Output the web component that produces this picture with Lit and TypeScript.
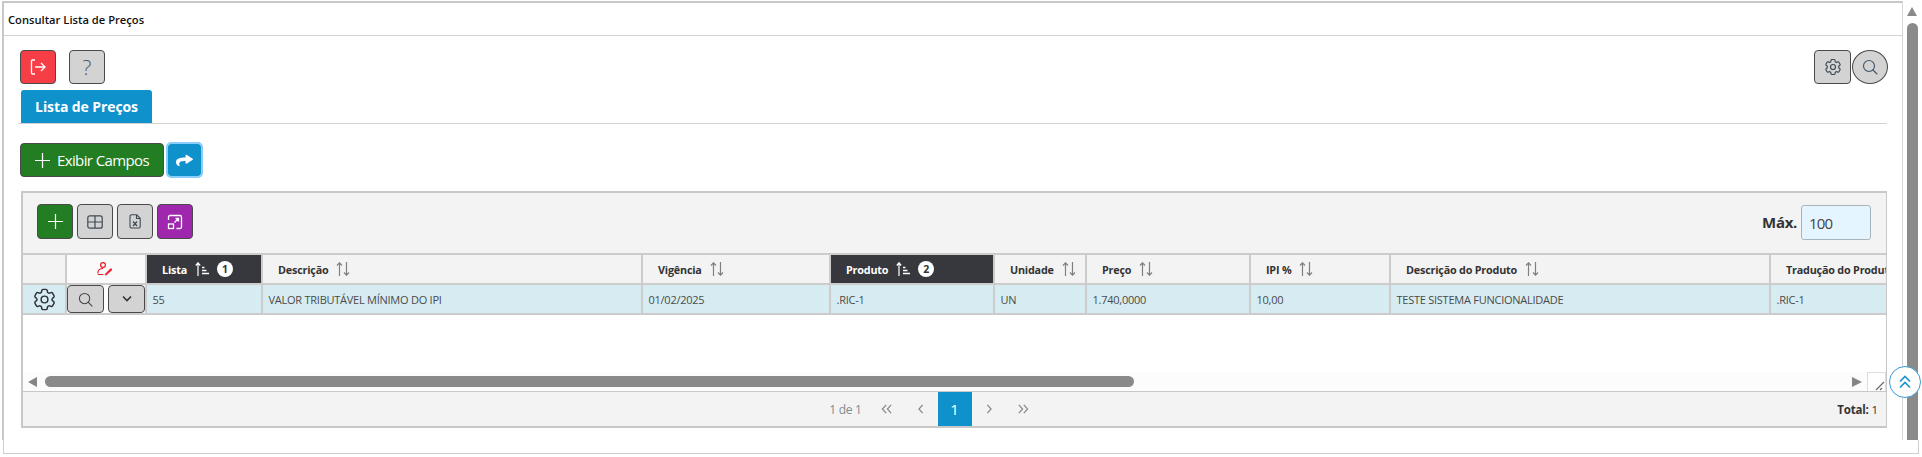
import { LitElement, html, css, svg } from "lit";
import { customElement } from "lit/decorators.js";

const sortBoth = html`<svg class="sort" width="14" height="14" viewBox="0 0 14 14" fill="none" stroke="#808080" stroke-width="1.200"><path d="M3.500 14V1M1 3.500L3.500 .8 6 3.500"/><path d="M10.500 0v13M8 10.500l2.500 2.700 2.500-2.700"/></svg>`;
const sortAsc = html`<svg class="sort" width="14" height="14" viewBox="0 0 14 14" fill="none" stroke="#fff" stroke-width="1.200"><path d="M3 14V1M.8 3.500L3 .8l2.200 2.700"/><path d="M7 5.500h2.500M7 8.500h4.500M7 11.500h7" stroke-width="1.400"/></svg>`;

const cols = [
  { w: 116, t: "Lista", k: 1, v: "55" },
  { w: 380, t: "Descrição", v: "VALOR TRIBUTÁVEL MÍNIMO DO IPI" },
  { w: 188, t: "Vigência", v: "01/02/2025" },
  { w: 164, t: "Produto", k: 2, v: ".RIC-1" },
  { w: 92, t: "Unidade", v: "UN" },
  { w: 164, t: "Preço", v: "1.740,0000" },
  { w: 140, t: "IPI %", v: "10,00" },
  { w: 380, t: "Descrição do Produto", v: "TESTE SISTEMA FUNCIONALIDADE" },
  { w: 200, t: "Tradução do Produto", v: ".RIC-1" },
];

const gear = (s: number, c: string, w: number) => svg`<svg width="${s}" height="${s}" viewBox="0 0 24 24" fill="none" stroke="${c}" stroke-width="${w}" stroke-linejoin="round"><path d="M9.594 3.940c.09-.542.56-.94 1.110-.94h2.593c.55 0 1.020.398 1.110.94l.213 1.281c.063.374.313.686.645.870.074.04.147.083.22.127.325.196.72.257 1.075.124l1.217-.456a1.125 1.125 0 0 1 1.370.49l1.296 2.247a1.125 1.125 0 0 1-.26 1.431l-1.003.827c-.293.241-.438.613-.43.992a7.723 7.723 0 0 1 0 .255c-.008.378.137.75.43.991l1.004.827c.424.35.534.955.26 1.430l-1.298 2.247a1.125 1.125 0 0 1-1.369.491l-1.217-.456c-.355-.133-.75-.072-1.076.124a6.470 6.470 0 0 1-.22.128c-.331.183-.581.495-.644.869l-.213 1.281c-.09.543-.56.94-1.110.94h-2.594c-.55 0-1.019-.398-1.110-.94l-.213-1.281c-.062-.374-.312-.686-.644-.87a6.520 6.520 0 0 1-.22-.127c-.325-.196-.72-.257-1.076-.124l-1.217.456a1.125 1.125 0 0 1-1.369-.49l-1.297-2.247a1.125 1.125 0 0 1 .26-1.431l1.004-.827c.292-.24.437-.613.43-.991a6.932 6.932 0 0 1 0-.255c.007-.38-.138-.751-.43-.992l-1.004-.827a1.125 1.125 0 0 1-.26-1.430l1.297-2.247a1.125 1.125 0 0 1 1.370-.491l1.216.456c.356.133.751.072 1.076-.124.072-.044.146-.086.22-.128.332-.183.582-.495.644-.869l.214-1.280Z"/><circle cx="12" cy="12" r="3"/></svg>`;
const search = (s: number, c: string) => svg`<svg width="${s}" height="${s}" viewBox="0 0 16 16" fill="none" stroke="${c}" stroke-width="1.100"><circle cx="7" cy="7" r="5.500"/><path d="M11 11l4 4" stroke-linecap="round"/></svg>`;
const chevs = (d: string) => svg`<svg width="12" height="10" viewBox="0 0 14 12" fill="none" stroke="#858585" stroke-width="1.400"><path d="${d}"/></svg>`;
const plus = html`<svg width="15" height="15" viewBox="0 0 16 16" stroke="#fff" stroke-width="1.300"><path d="M8 0v16M0 8h16"/></svg>`;

@customElement("app-root")
export class AppRoot extends LitElement {
  static styles = css`
    :host { display: block; width: 1922px; height: 457px; overflow: hidden; background: #fff; font-family: "Open Sans", "Noto Sans", sans-serif; color: #333; position: relative; }
    * { box-sizing: border-box; }
    .page { padding-top: 1px; }
    .main { display: flex; height: 439px; }
    .below { height: 14px; width: 1916px; margin-left: 3px; border: 1px solid #cfcfcf; border-top: none; }
    .frame { width: 1901px; flex: none; border: 1px solid #d6d6d6; border-left: 2px solid #c8c8c8; border-top: 2px solid #c8c8c8; border-bottom: none; margin-left: 2px; }
    .vbar { width: 19px; flex: none; display: flex; flex-direction: column; align-items: flex-start; padding: 6px 0 0 4px; }
    .vup { width: 0; height: 0; border-left: 5.500px solid transparent; border-right: 5.500px solid transparent; border-bottom: 9px solid #8a8a8a; }
    .vthumb { width: 11px; flex: 1; margin-top: 7px; background: #8a8a8a; border-radius: 6px 6px 0 0; }
    .title { height: 33px; border-bottom: 1px solid #d2d2d2; display: flex; align-items: center; padding-left: 4px; font-size: 11.200px; font-weight: 600; color: #111; }
    .content { padding: 14px 15px 0 16px; }
    .topbar { display: flex; height: 34px; align-items: stretch; }
    .btn { width: 36px; height: 34px; border-radius: 4px; border: 1px solid #4a4a4a; background: #d3d3d3; display: flex; align-items: center; justify-content: center; flex: none; color: #555; }
    .red { background: #f63e46; }
    .help { margin-left: 13px; font-size: 21px; font-weight: 300; color: #4c5560; }
    .spacer { flex: 1; }
    .cfg { width: 37px; }
    .round { border-radius: 50%; margin-left: 1px; margin-right: -1px; }
    .tabs { border-bottom: 1px solid #d2d2d2; margin-top: 6px; height: 34px; margin-left: -2px; padding-left: 3px; }
    .tab { display: inline-flex; width: 131px; height: 33px; align-items: center; justify-content: center; background: #0f91cc; color: #fff; font-weight: 700; font-size: 14px; border-radius: 3px 3px 0 0; letter-spacing: -0.100px; }
    .actions { display: flex; margin-top: 19px; height: 34px; }
    .green { background: #227d23; color: #fff; }
    .show { width: 144px; gap: 7px; font-size: 15px; letter-spacing: -0.600px; font-weight: 400; }
    .share { background: #0f91cc; border: none; outline: 2.500px solid #8bcdfb; width: 33px; height: 32px; margin: 1px 0 0 4px; border-radius: 3px; }
    .panel { margin-top: 14px; margin-left: 1px; border: 1px solid #c8c8c8; border-top-width: 2px; border-left-width: 2px; }
    .tools { height: 60px; background: #f3f3f3; display: flex; align-items: center; padding: 0 15px 3px 14px; gap: 4px; }
    .tools .btn { width: 36px; height: 35px; }
    .purple { background: #9f27ad; }
    .max { font-weight: 700; font-size: 15px; letter-spacing: -0.300px; }
    .input { width: 70px; height: 35px; margin-top: 2px; background: #e5f5ff; border: 1px solid #a9b4ba; border-radius: 3px; font-size: 15px; display: flex; align-items: center; padding-left: 7px; color: #444; letter-spacing: -0.800px; }
    .grid { overflow: hidden; }
    .hrow, .drow { display: flex; width: max-content; }
    .hrow { height: 32px; background: #f3f3f3; border-top: 2px solid #ccc; border-bottom: 2px solid #ccc; }
    .drow { height: 30px; background: #d7ecf2; border-bottom: 2px solid #ccc; }
    .c0 { width: 44px; border-right: 2px solid #ccc; display: flex; align-items: center; justify-content: center; flex: none; }
    .c1 { width: 80px; border-right: 2px solid #ccc; display: flex; align-items: center; padding-right: 2px; justify-content: center; gap: 4px; flex: none; }
    .hrow .c1 { background: #fafafa; }
    .drow .c1 { background: #fff; padding-right: 0; }
    .mini { height: 28px; width: 37px; border-radius: 4px; }
    .hc { flex: none; border-right: 2px solid #ccc; display: flex; align-items: center; padding-left: 15px; gap: 8px; font-weight: 700; font-size: 10.800px; color: #333; letter-spacing: -0.200px; white-space: nowrap; }
    .hc.dark { background: #37383d; color: #fff; }
    .badge { width: 16px; height: 16px; border-radius: 50%; background: #fff; color: #333; font-size: 10.500px; font-weight: 700; display: flex; align-items: center; justify-content: center; letter-spacing: 0; }
    .dc { flex: none; border-right: 2px solid #ccc; display: flex; align-items: center; padding-left: 5.500px; font-size: 11px; color: #4a4a4a; letter-spacing: -0.250px; white-space: nowrap; }
    .blank { height: 57px; }
    .hbar { height: 19px; display: flex; align-items: center; background: #fcfcfc; }
    .la { width: 0; height: 0; border-top: 5.500px solid transparent; border-bottom: 5.500px solid transparent; border-right: 9px solid #858585; margin-left: 5px; }
    .ra { width: 0; height: 0; border-top: 5.500px solid transparent; border-bottom: 5.500px solid transparent; border-left: 10px solid #858585; margin-left: 718px; }
    .hthumb { width: 1089px; height: 11px; background: #8a8a8a; border-radius: 6px; margin-left: 8px; }
    .rz { width: 19px; height: 19px; margin-left: 5px; background: #fff; border: 1px solid #ddd; border-bottom: none; display: flex; align-items: flex-end; justify-content: flex-end; }
    .foot { height: 36px; background: #f3f3f3; border-top: 1px solid #c8c8c8; border-bottom: 1px solid #c8c8c8; display: grid; grid-template-columns: 1fr auto 1fr; font-size: 12px; color: #808a90; }
    .pi { width: 34px; display: flex; align-items: center; justify-content: center; }
    .pinfo { display: flex; align-items: center; justify-content: flex-end; padding-right: 8px; letter-spacing: -0.300px; }
    .pcur { background: #0f91cc; color: #fff; font-size: 15px; }
    .pager { display: flex; }
    .total { display: flex; align-items: center; justify-content: flex-end; padding-right: 8px; color: #333; font-size: 11.500px; letter-spacing: -0.200px; }
    .total b { margin-right: 3px; }
    .topbtn { position: absolute; left: 1889px; top: 366px; width: 32px; height: 32px; border-radius: 50%; background: #fff; border: 1px solid #3a9bd5; display: flex; align-items: center; justify-content: center; }
  `;

  render() {
    return html`
      <div class="page">
        <div class="main">
          <div class="frame">
            <div class="title">Consultar Lista de Preços</div>
            <div class="content">
              <div class="topbar">
                <div class="btn red">
                  <svg width="16" height="16" viewBox="0 0 16 16" fill="none" stroke="#fff" stroke-width="1.300"><path d="M5 1H2.500a1 1 0 0 0-1 1v12a1 1 0 0 0 1 1H5M5 8h10M11 4l4 4-4 4"/></svg>
                </div>
                <div class="btn help">?</div>
                <div class="spacer"></div>
                <div class="btn cfg">${gear(20, "#3f4a55", 1.4)}</div>
                <div class="btn round">${search(16, "#3f5468")}</div>
              </div>
              <div class="tabs"><div class="tab">Lista de Preços</div></div>
              <div class="actions">
                <div class="btn green show">${plus}<span>Exibir Campos</span></div>
                <div class="btn share">
                  <svg width="17" height="13" viewBox="0 0 512 512" fill="#fff" preserveAspectRatio="none"><path d="M503.700 189.800L327.700 37.900C312.300 24.500 288 35.300 288 56v80.100C127.400 138 0 170.100 0 322c0 61.200 39.500 121.900 83.100 153.600 13.600 9.900 33-2.500 28-18.600C66 312.800 132.900 274.300 288 272.100V360c0 20.700 24.300 31.500 39.700 18.200l176-152c11.100-9.600 11.100-26.800 0-36.400z"/></svg>
                </div>
              </div>
              <div class="panel">
                <div class="tools">
                  <div class="btn green">${plus}</div>
                  <div class="btn">
                    <svg width="16" height="14" viewBox="0 0 16 14" fill="none" stroke="#3f4a55" stroke-width="1.200"><rect x=".8" y=".8" width="14.400" height="12.400" rx="2"/><path d="M8 1v12M1 7h14"/></svg>
                  </div>
                  <div class="btn">
                    <svg width="12" height="15" viewBox="0 0 12 15" fill="none" stroke="#3f4a55" stroke-width="1.100"><path d="M2.500 .8h5.200l3.500 3.500v8.200a1.500 1.500 0 0 1-1.500 1.500h-7.200A1.500 1.500 0 0 1 1 12.500v-10A1.500 1.500 0 0 1 2.500 .8zM7.500 1v3.500H11"/><path d="M4 7.500l4 4.500M8 7.500L4 12" stroke-width="1.300"/></svg>
                  </div>
                  <div class="btn purple">
                    <svg width="16" height="16" viewBox="0 0 16 16" fill="none" stroke="#fff" stroke-width="1.300"><path d="M1.500 6V3a1.500 1.500 0 0 1 1.500-1.500h10A1.500 1.500 0 0 1 14.500 3v10a1.500 1.500 0 0 1-1.500 1.500H9.500M7.500 8.500l4-4M8.500 4.500h3v3"/><rect x="1.500" y="10" width="5" height="4.500"/></svg>
                  </div>
                  <div class="spacer"></div>
                  <span class="max">Máx.</span>
                  <div class="input">100</div>
                </div>
                <div class="grid">
                  <div class="hrow">
                    <div class="c0"></div>
                    <div class="c1">
                      <svg width="16" height="14" viewBox="0 0 16 14" fill="none" stroke="#ee1c25" stroke-width="1.200"><circle cx="6" cy="3" r="2.400"/><path d="M.8 11.500c0-3 2-5 5.200-5M.8 12.500h5.500"/><path d="M8 12.500l5.800-6 1.200 1.200-6 5.500z" fill="#ee1c25" stroke-width=".8"/></svg>
                    </div>
                    ${cols.map(
                      (c) => html`<div class="hc ${c.k ? "dark" : ""}" style="width:${c.w}px">
                        <span>${c.t}</span>${c.k ? sortAsc : sortBoth}
                        ${c.k ? html`<span class="badge">${c.k}</span>` : ""}
                      </div>`
                    )}
                  </div>
                  <div class="drow">
                    <div class="c0">${gear(27, "#2d3033", 1.3)}</div>
                    <div class="c1">
                      <div class="btn mini">${search(15, "#444")}</div>
                      <div class="btn mini">
                        <svg width="12" height="8" viewBox="0 0 12 8" fill="none" stroke="#333" stroke-width="1.600"><path d="M2 1.500l4 4 4-4"/></svg>
                      </div>
                    </div>
                    ${cols.map((c) => html`<div class="dc" style="width:${c.w}px">${c.v}</div>`)}
                  </div>
                </div>
                <div class="blank"></div>
                <div class="hbar">
                  <div class="la"></div>
                  <div class="hthumb"></div>
                  <div class="ra"></div>
                  <div class="rz">
                    <svg width="10" height="10" viewBox="0 0 10 10" stroke="#666" stroke-width="1.100"><path d="M1 9l8-8M5 9l2-2"/></svg>
                  </div>
                </div>
                <div class="foot">
                  <div class="pinfo">1 de 1</div>
                  <div class="pager">
                    <div class="pi">${chevs("M6 1L1.500 6 6 11M12 1L7.500 6 12 11")}</div>
                    <div class="pi">${chevs("M9 1L4.500 6 9 11")}</div>
                    <div class="pi pcur">1</div>
                    <div class="pi">${chevs("M5 1l4.500 5L5 11")}</div>
                    <div class="pi">${chevs("M2 1l4.500 5L2 11M8 1l4.500 5L8 11")}</div>
                  </div>
                  <div class="total"><b>Total:</b> 1</div>
                </div>
              </div>
            </div>
          </div>
          <div class="vbar">
            <div class="vup"></div>
            <div class="vthumb"></div>
          </div>
        </div>
        <div class="below"></div>
      </div>
      <div class="topbtn">
        <svg width="14" height="14" viewBox="0 0 14 14" fill="none" stroke="#1a93d0" stroke-width="1.700"><path d="M2 6.500l5-5 5 5M2 12.500l5-5 5 5"/></svg>
      </div>
    `;
  }
}
